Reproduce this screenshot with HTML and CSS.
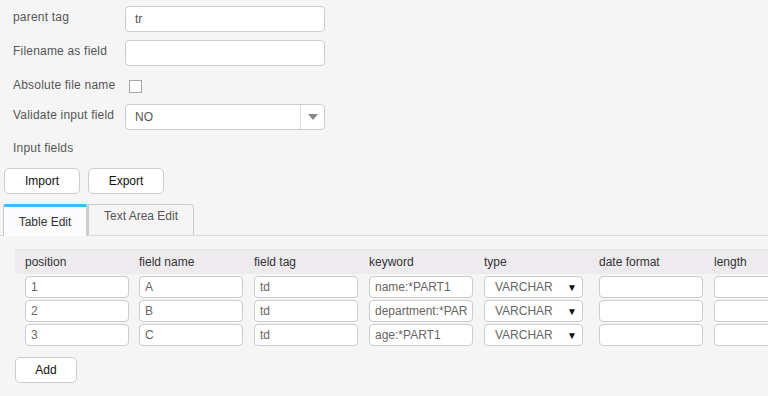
FILE: index.html
```html
<!DOCTYPE html>
<html lang="en">
<head>
	<meta charset="UTF-8">
	<title>Input fields</title>
	<link rel="stylesheet" href="styles.css">
</head>
<body>
	<div class="form">
		<label class="lbl">parent tag</label>
		<input class="text" type="text" value="tr">
		<label class="lbl">Filename as field</label>
		<input class="text" type="text" value="">
		<label class="lbl lbl-check">Absolute file name</label>
		<div class="check-wrap"><span class="check"></span></div>
		<label class="lbl">Validate input field</label>
		<div class="combo">
			<span class="combo-val">NO</span>
			<span class="combo-btn"><i class="tri"></i></span>
		</div>
		<label class="lbl lbl-wide">Input fields</label>
	</div>
	<div class="actions">
		<a class="btn btn-io" href="javascript:;">Import</a>
		<a class="btn btn-io" href="javascript:;">Export</a>
	</div>
	<div class="tabs">
		<a class="tab active" href="javascript:;">Table Edit</a>
		<a class="tab" href="javascript:;">Text Area Edit</a>
	</div>
	<div class="grid">
		<div class="head">
			<span>position</span>
			<span>field name</span>
			<span>field tag</span>
			<span>keyword</span>
			<span>type</span>
			<span>date format</span>
			<span>length</span>
		</div>
		<div class="line">
			<input class="cell" value="1"><input class="cell" value="A"><input class="cell" value="td"><input class="cell" value="name:*PART1">
			<div class="sel"><span>VARCHAR</span><span class="arr">&#9660;</span></div>
			<input class="cell" value=""><input class="cell" value="">
		</div>
		<div class="line">
			<input class="cell" value="2"><input class="cell" value="B"><input class="cell" value="td"><input class="cell" value="department:*PART1">
			<div class="sel"><span>VARCHAR</span><span class="arr">&#9660;</span></div>
			<input class="cell" value=""><input class="cell" value="">
		</div>
		<div class="line">
			<input class="cell" value="3"><input class="cell" value="C"><input class="cell" value="td"><input class="cell" value="age:*PART1">
			<div class="sel"><span>VARCHAR</span><span class="arr">&#9660;</span></div>
			<input class="cell" value=""><input class="cell" value="">
		</div>
		<a class="btn btn-add" href="javascript:;">Add</a>
	</div>
</body>
</html>
```

FILE: styles.css
```css
*{padding: 0; margin: 0; box-sizing: border-box;}
html,body{width: 768px; height: 396px; overflow: hidden;}
body{background: #f5f5f5; font-family: "Liberation Sans", Arial, sans-serif; font-size: 12px; color: #555;}
a{text-decoration: none;}

.form{display: grid; grid-template-columns: 112px 200px; grid-template-rows: 26px 26px 22px 26px 20px; row-gap: 8px; padding: 6px 0 0 13px;}
.form .lbl{display: flex; align-items: center; padding-bottom: 4px; color: #555; letter-spacing: .2px; white-space: nowrap;}
.form .lbl-check{padding-bottom: 0;}
.form .lbl-wide{grid-column: 1 / 3; padding-bottom: 0;}
.form .text{height: 26px; border: 1px solid #ccc; border-radius: 4px; background: #fff; padding: 0 9px; font: inherit; color: #555; outline: none;}
.check-wrap{display: flex; align-items: center; padding-left: 4px; padding-top: 2px;}
.check{width: 13px; height: 13px; border: 1px solid #a6a6a6; background: #fff;}
.combo{display: flex; height: 26px; border: 1px solid #ccc; border-radius: 4px; background: #fff;}
.combo-val{flex: 1; display: flex; align-items: center; padding-left: 9px; color: #555;}
.combo-btn{width: 24px; border-left: 1px solid #ddd; display: flex; align-items: center; justify-content: center;}
.tri{width: 0; height: 0; border-left: 5px solid transparent; border-right: 5px solid transparent; border-top: 6px solid #888;}

.actions{display: flex; gap: 8px; padding: 10px 0 0 4px;}
.btn{display: flex; align-items: center; justify-content: center; height: 26px; border: 1px solid #ccc; border-radius: 5px; background: #fff; color: #111;}
.btn-io{width: 76px;}

.tabs{display: flex; margin-top: 10px; padding-left: 3px; border-bottom: 1px solid #dcdcdc; height: 32px;}
.tab{display: flex; justify-content: center; color: #555;}
.tab.active{width: 85px; height: 32px; margin-bottom: -1px; border-top: 3px solid #3dbdf5; border-left: 1px solid #ccc; border-right: 2px solid #ccc; background: #fcfbfd; align-items: center; color: #333; border-radius: 3px 3px 0 0;}
.tab:not(.active){width: 106px; height: 31px; border: 1px solid #ccc; border-bottom: none; border-radius: 0 4px 0 0; padding-top: 4px;}

.grid{padding: 13px 0 0 15px;}
.head{display: grid; grid-template-columns: 114px repeat(6, 115px) 200px; height: 25px; align-items: center; background: #eeebef; border-top: 1px solid #e3e3e3; color: #333;}
.head span{padding-left: 10px;}
.line{display: grid; grid-template-columns: 114px repeat(6, 115px); margin-top: 2px; padding-left: 10px;}
.line .cell, .line .sel{width: 104px; height: 22px; border: 1px solid #ccc; border-radius: 4px; background: #fff; font: inherit; color: #666; padding: 0 5px; outline: none;}
.line .sel{width: 99px; display: flex; align-items: center; justify-content: space-between; padding: 0 5px 0 10px;}
.arr{font-size: 10px; color: #111;}
.btn-add{width: 62px; height: 26px; margin-top: 11px;}
```
